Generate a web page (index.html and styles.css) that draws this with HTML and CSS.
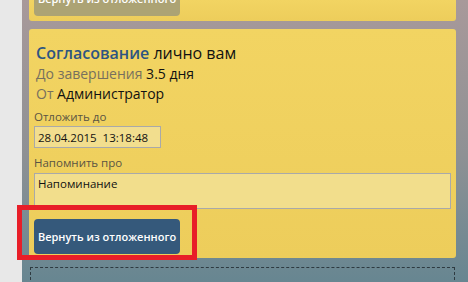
FILE: index.html
```html
<!DOCTYPE html>
<html lang="ru">
<head>
    <meta charset="UTF-8">
    <title>Отложенные задачи</title>
    <link rel="stylesheet" href="styles.css">
</head>
<body>
    <div class="side"></div>
    <div class="board">
        <div class="card card-cut">
            <button class="btn btn-muted">Вернуть из отложенного</button>
        </div>

        <div class="card">
            <div class="task-head">
                <div class="title"><span class="kind">Согласование</span> лично вам</div>
                <div class="meta"><span class="muted">До завершения</span> 3.5 дня</div>
                <div class="meta"><span class="muted">От</span> Администратор</div>
            </div>

            <label class="field-label">Отложить до</label>
            <input class="date-input" type="text" value="28.04.2015  13:18:48">

            <label class="field-label field-label-gap">Напомнить про</label>
            <textarea class="note">Напоминание</textarea>

            <button class="btn btn-primary">Вернуть из отложенного</button>
        </div>

        <div class="drop-zone"></div>
    </div>

    <div class="highlight"></div>
</body>
</html>
```

FILE: styles.css
```css
body {
    margin: 0;
    height: 282px;
    overflow: hidden;
    display: flex;
    font-family: "Open Sans", "Noto Sans", sans-serif;
    color: #111;
}
.side {
    width: 22px;
    background: #e8e8e8;
}
.board {
    flex: 1;
    padding: 0 12px 0 7px;
    background: linear-gradient(#a8999a, #8e9194 55%, #678691);
}
.card {
    background: linear-gradient(#f2d462, #edcd5b);
    padding: 14px 5px 4px 5px;
    margin-top: 8px;
    border-radius: 3px;
}
.card-cut {
    height: 21px;
    margin-top: 0;
    padding: 0 5px 5px 5px;
    box-sizing: border-box;
    border-radius: 0 0 3px 3px;
    overflow: hidden;
    display: flex;
    align-items: flex-end;
}
.card-cut .btn {
    flex-shrink: 0;
}
.task-head {
    padding-left: 2px;
}
.title {
    font-size: 16px;
    line-height: 21px;
}
.kind {
    color: #2d5582;
    font-weight: 600;
}
.meta {
    font-size: 14px;
    line-height: 20px;
}
.muted {
    color: #77705e;
}
.field-label {
    display: block;
    margin-top: 5px;
    font-size: 11.5px;
    line-height: 16px;
    color: #5a5443;
}
.field-label-gap {
    margin-top: 7px;
}
.date-input {
    display: block;
    margin-top: 1px;
    width: 127px;
    height: 22px;
    box-sizing: border-box;
    padding: 0 3px;
    border: 1px solid #a9a9a9;
    background: #f2de8e;
    font-family: inherit;
    font-size: 11.5px;
    color: #111;
}
.note {
    display: block;
    margin-top: 2px;
    width: 100%;
    height: 36px;
    box-sizing: border-box;
    padding: 2px 3px;
    border: 1px solid #a9a9a9;
    background: #f2de8c;
    font-family: inherit;
    font-size: 11.5px;
    line-height: 16px;
    color: #111;
    resize: none;
}
.btn {
    display: block;
    width: 146px;
    height: 35px;
    border: none;
    border-radius: 4px;
    font-family: inherit;
    font-size: 11px;
    font-weight: 600;
    color: #fff;
    padding: 0;
}
.btn-primary {
    margin-top: 10px;
    background: #35597b;
}
.btn-muted {
    background: #aca374;
}
.drop-zone {
    margin: 9px 1px 0 1px;
    height: 12px;
    border: 1px dashed #2e3a40;
    border-bottom: none;
}
.highlight {
    position: absolute;
    left: 17px;
    top: 205px;
    width: 170px;
    height: 45px;
    border: 5px solid #e81e28;
}
```
